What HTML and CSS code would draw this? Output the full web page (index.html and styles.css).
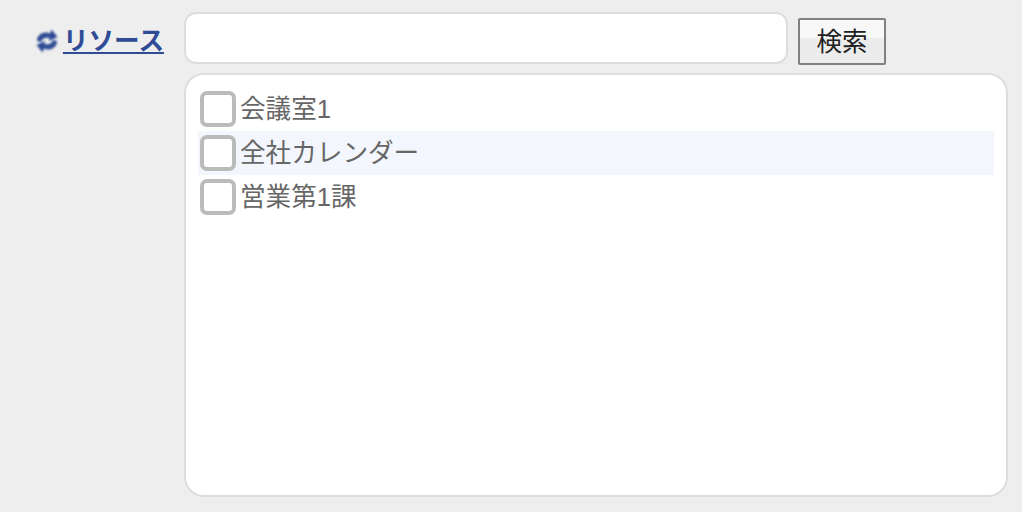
FILE: index.html
```html
<!DOCTYPE html>
<html lang="ja">
<head>
  <meta charset="UTF-8" />
  <title>リソース</title>
  <link rel="stylesheet" href="styles.css">
</head>
<body>
  <div class="resource-form">
    <div class="label-col">
      <svg class="sync-icon" width="22" height="28" viewBox="0 0 22 28">
        <path d="M1 14 C1 8 6 5 11 5.500 L14 6.500 L15.500 2.500 L21.500 10 L13 14 L13.500 11 C10 10 6 11 5 15 Z" />
        <path d="M21 14 C21 20 16 23 11 22.500 L8 21.500 L6.500 25.500 L0.500 18 L9 14 L8.500 17 C12 18 16 17 17 13 Z" />
      </svg>
      <a class="resource-link" href="#">リソース</a>
    </div>
    <div class="main-col">
      <div class="search-row">
        <input class="search-input" type="text">
        <button class="search-btn">検索</button>
      </div>
      <div class="list-box">
        <label class="list-item"><span class="check"></span><span class="item-text">会議室1</span></label>
        <label class="list-item hover"><span class="check"></span><span class="item-text">全社カレンダー</span></label>
        <label class="list-item"><span class="check"></span><span class="item-text">営業第1課</span></label>
      </div>
    </div>
  </div>
</body>
</html>
```
FILE: styles.css
```css
body {
  margin: 0;
  background: #eeeeee;
  font-family: "Liberation Sans", "Noto Sans CJK JP", sans-serif;
}
.resource-form {
  display: flex;
  height: 512px;
  box-sizing: border-box;
  padding: 12px 15px 0 0;
}
.label-col {
  width: 184px;
  flex: none;
  display: flex;
  justify-content: flex-end;
  align-items: flex-start;
  padding: 14px 20px 0 0;
  box-sizing: border-box;
}
.sync-icon {
  fill: #2f4b95;
  filter: blur(0.9px);
  margin: 1px 5px 0 0;
}
.resource-link {
  color: #2f4b95;
  font-size: 25.6px;
  line-height: 30px;
  font-weight: bold;
}
.main-col {
  flex: 1;
  display: flex;
  flex-direction: column;
  gap: 9px;
}
.search-row {
  display: flex;
  align-items: flex-start;
  gap: 10px;
  height: 52px;
}
.search-input {
  width: 604px;
  height: 52px;
  box-sizing: border-box;
  border: 2px solid #dddddd;
  border-radius: 12px;
  background: #ffffff;
}
.search-btn {
  width: 88px;
  height: 47px;
  margin-top: 6px;
  padding: 0 0 5px;
  border: 2px solid #808080;
  border-radius: 2px;
  background: linear-gradient(#f8f8f8 0, #f8f8f8 42%, #ececec 42%, #ececec 100%);
  color: #222222;
  font-size: 25.6px;
  font-family: inherit;
}
.list-box {
  width: 824px;
  height: 424px;
  box-sizing: border-box;
  border: 2px solid #dddddd;
  border-radius: 20px;
  background: #ffffff;
  padding: 12px 12px;
}
.list-item {
  display: flex;
  align-items: center;
  height: 44px;
  color: #666666;
  font-size: 25.6px;
  gap: 4px;
}
.list-item.hover {
  background: #f3f6fc;
}
.item-text {
  padding-bottom: 6px;
}
.check {
  width: 36px;
  height: 36px;
  margin-left: 2px;
  box-sizing: border-box;
  border: 4px solid #bbbbbb;
  border-radius: 7px;
  background: #ffffff;
}
```
